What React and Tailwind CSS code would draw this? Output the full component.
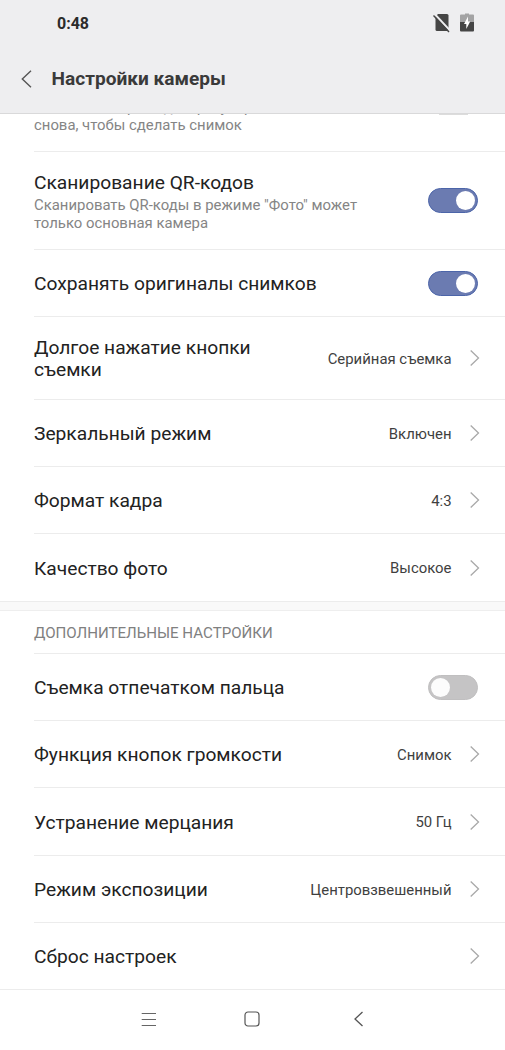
import React, { useState } from 'react';

const cameraItems = [
  {
    id: 'qr',
    title: 'Сканирование QR-кодов',
    hint: 'Сканировать QR-коды в режиме "Фото" может только основная камера',
    toggle: true,
    height: 'h-[97px]',
  },
  { id: 'originals', title: 'Сохранять оригиналы снимков', toggle: true, height: 'h-[66px]' },
  { id: 'longPress', title: 'Долгое нажатие кнопки съемки', value: 'Серийная съемка', height: 'h-[82px]' },
  { id: 'mirror', title: 'Зеркальный режим', value: 'Включен', height: 'h-[66px]' },
  { id: 'ratio', title: 'Формат кадра', value: '4:3', height: 'h-[66px]' },
  { id: 'quality', title: 'Качество фото', value: 'Высокое', height: 'h-[67px]', last: true },
];

const extraItems = [
  { id: 'fingerprint', title: 'Съемка отпечатком пальца', toggle: true, height: 'h-[66px]' },
  { id: 'volume', title: 'Функция кнопок громкости', value: 'Снимок', height: 'h-[66px]' },
  { id: 'flicker', title: 'Устранение мерцания', value: '50 Гц', height: 'h-[67px]' },
  { id: 'exposure', title: 'Режим экспозиции', value: 'Центровзвешенный', height: 'h-[66px]' },
  { id: 'reset', title: 'Сброс настроек', height: 'h-[66px]', last: true },
];

const Chevron = () => (
  <svg className="ml-[17px] h-[18px] w-[11px] shrink-0" viewBox="0 0 11 18" fill="none" stroke="#a9a9a9" strokeWidth="1.3">
    <path d="M1.700 1.500 9.500 9l-7.800 7.500" />
  </svg>
);

const Switch = ({ checked, onChange }) => (
  <button
    type="button"
    role="switch"
    aria-checked={checked}
    onClick={onChange}
    className={`flex h-[25px] w-[50px] shrink-0 items-center rounded-full border ${
      checked ? 'justify-end border-[#4c65a9] bg-[#6b7bb1] pr-[2px]' : 'justify-start border-[#c0bfc0] bg-[#c5c4c5] pl-[2px]'
    }`}
  >
    <span className={`h-[19px] w-[19px] rounded-full ${checked ? 'bg-white' : 'bg-[#fcfcfc]'}`} />
  </button>
);

const SettingRow = ({ item, checked, onToggle }) => (
  <div className={`border-b border-[#ececec] ${item.last ? 'pl-[34px]' : 'ml-[34px]'}`}>
    <div className={`flex items-center ${item.toggle ? 'pr-[26.800px]' : 'pr-[25.500px]'} ${item.height}`}>
      <div className={`flex-1 ${item.hint ? 'pt-[3px]' : 'pt-[2px]'}`}>
        <div className={`text-[19.2px] leading-[22px] text-[#222] ${item.value ? 'max-w-[260px]' : ''}`}>{item.title}</div>
        {item.hint && <div className="mt-[2px] max-w-[340px] text-[14.9px] leading-[18px] text-[#858585]">{item.hint}</div>}
      </div>
      {item.value && <span className="pt-[2px] text-[14.9px] text-[#3f3f3f]">{item.value}</span>}
      {item.toggle ? <Switch checked={checked} onChange={() => onToggle(item.id)} /> : <Chevron />}
    </div>
  </div>
);

export default function App() {
  const [enabled, setEnabled] = useState({ qr: true, originals: true, fingerprint: false });

  const toggle = (id) => setEnabled({ ...enabled, [id]: !enabled[id] });

  return (
    <div className="flex h-[1050px] w-[505px] flex-col overflow-hidden bg-white font-[Roboto,sans-serif]">
      <header className="h-[114px] shrink-0 border-b border-[#d9d9da] bg-[#eeeef0]">
        <div className="flex h-[45px] items-center justify-between pl-[57px] pr-[31px]">
          <span className="pt-[2px] text-[16px] font-bold text-[#2b2b2b]">0:48</span>
          <div className="flex items-center gap-[10px]">
            <svg className="h-[20px] w-[17px]" viewBox="0 0 17 20">
              <path d="M5 1h9q1.500 0 1.500 1.500v14q0 1.500-1.500 1.500H4q-1.500 0-1.500-1.500V3.500z" fill="#454545" />
              <path d="M1.800 1.300 17 17.500" stroke="#eeeef0" strokeWidth="2" />
              <path d="M.5 2.500 16 19" stroke="#454545" strokeWidth="1.400" />
            </svg>
            <svg className="h-[20px] w-[14px]" viewBox="0 0 14 20">
              <path d="M0 2.500Q0 1.500 1 1.500h4V.5h4v1h4q1 0 1 1V9H0z" fill="#a3a3a4" />
              <path d="M0 9h14v8.500q0 1-1 1H1q-1 0-1-1z" fill="#454545" />
              <path d="M8 3.500 4 11H6.300v5L10.200 8.500H8z" fill="#fff" />
            </svg>
          </div>
        </div>
        <div className="flex h-[68px] items-center pl-[21px]">
          <svg className="-mt-px h-[18px] w-[11px]" viewBox="0 0 11 18" fill="none" stroke="#555" strokeWidth="1.400">
            <path d="M10 .8 1.300 9l8.700 8.200" />
          </svg>
          <h1 className="ml-[19.500px] pt-px text-[19.1px] font-bold text-[#3a3a3a]">Настройки камеры</h1>
        </div>
      </header>

      <main className="shrink-0">
        <div className="ml-[34px] flex h-[38px] items-end justify-between overflow-hidden border-b border-[#ececec] pb-[17px] pr-[37px]">
          <p className="text-[14.9px] leading-[18px] text-[#858585]">
            Коснитесь экрана для фокусировки и
            <br />
            снова, чтобы сделать снимок
          </p>
          <div className="h-px w-[29px] self-start bg-[#dcdcdc]" />
        </div>
        {cameraItems.map((item) => (
          <SettingRow key={item.id} item={item} checked={enabled[item.id]} onToggle={toggle} />
        ))}

        <div className="h-[9px] border-b border-[#eee] bg-[#f9f9f9]" />
        <h2 className="ml-[34px] flex h-[43px] items-center border-b border-[#ececec] pt-[2px] text-[15.1px] text-[#808080]">
          ДОПОЛНИТЕЛЬНЫЕ НАСТРОЙКИ
        </h2>
        {extraItems.map((item) => (
          <SettingRow key={item.id} item={item} checked={enabled[item.id]} onToggle={toggle} />
        ))}
      </main>

      <nav className="flex h-[60px] shrink-0 items-center pb-[3px] pl-[141px]">
        <svg className="h-[16px] w-[16px]" viewBox="0 0 16 16" stroke="#666" strokeWidth="1.100">
          <path d="M.7 2.500h14.300M.7 8.500h14.300M.7 14.500h14.300" />
        </svg>
        <svg className="ml-[87px] h-[16px] w-[16px]" viewBox="0 0 16 16" fill="none" stroke="#555" strokeWidth="1.200">
          <rect x="1" y="1" width="14" height="14" rx="3" />
        </svg>
        <svg className="ml-[93px] h-[16px] w-[11px]" viewBox="0 0 11 16" fill="none" stroke="#555" strokeWidth="1.300">
          <path d="M9.500 1 2 8l7.500 7" />
        </svg>
      </nav>
    </div>
  );
}
